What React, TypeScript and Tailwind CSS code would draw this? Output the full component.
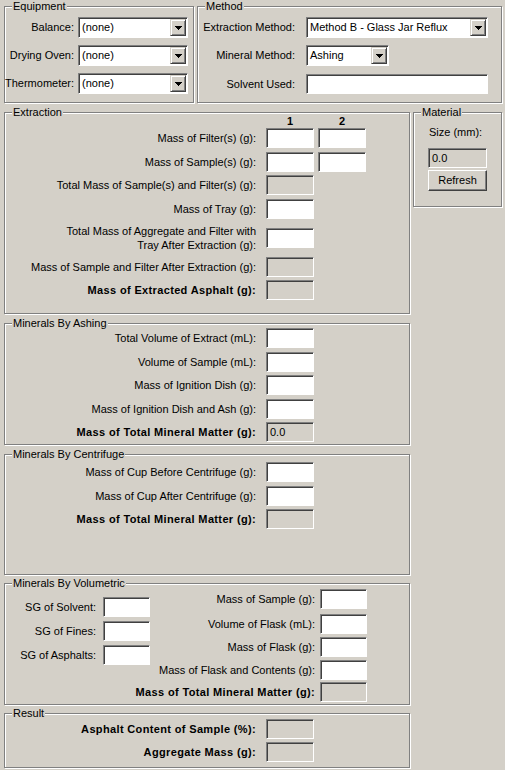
import React from "react";

type Kids = { children?: React.ReactNode };

function Group({ title, className, children }: { title: string; className: string } & Kids) {
  return (
    <div className={"relative shrink-0 border border-[#808080] shadow-[inset_1px_1px_0_#fff,1px_1px_0_#fff] " + className}>
      <span className="absolute left-[7px] top-[-7px] whitespace-nowrap bg-[#d4d0c8] px-[1px] leading-[13px]">{title}</span>
      {children}
    </div>
  );
}

function Field({ w = "w-[48px]", gray, value }: { w?: string; gray?: boolean; value?: string }) {
  return (
    <div
      className={
        "h-[20px] shrink-0 border border-t-[#808080] border-l-[#808080] border-b-white border-r-white shadow-[inset_1px_1px_0_#404040] pl-[3px] leading-[18px] " +
        w +
        (gray ? " bg-[#d4d0c8]" : " bg-white")
      }
    >
      {value}
    </div>
  );
}

function Arrow() {
  return (
    <svg width="7" height="4" viewBox="0 0 7 4" shapeRendering="crispEdges">
      <rect x="0" y="0" width="7" height="1" fill="#000" />
      <rect x="1" y="1" width="5" height="1" fill="#000" />
      <rect x="2" y="2" width="3" height="1" fill="#000" />
      <rect x="3" y="3" width="1" height="1" fill="#000" />
    </svg>
  );
}

function Combo({ w, value }: { w: string; value: string }) {
  return (
    <div
      className={
        "flex h-[21px] shrink-0 border border-t-[#808080] border-l-[#808080] border-b-white border-r-white bg-white p-[1px] shadow-[inset_1px_1px_0_#404040] " +
        w
      }
    >
      <span className="flex-1 truncate pl-[2px] leading-[17px]">{value}</span>
      <div className="flex h-[17px] w-[16px] items-center justify-center border border-t-[#d4d0c8] border-l-[#d4d0c8] border-b-[#404040] border-r-[#404040] bg-[#d4d0c8] shadow-[inset_1px_1px_0_#fff,inset_-1px_-1px_0_#808080]">
        <Arrow />
      </div>
    </div>
  );
}

// label + one or two boxes, label column is 251px wide, boxes start at x=266
function Row({ label, mt, bold, gray, value, second, tall }: {
  label: React.ReactNode; mt: string; bold?: boolean; gray?: boolean; value?: string; second?: boolean; tall?: boolean;
}) {
  return (
    <div className={"flex items-center " + mt + (tall ? " h-[28px]" : " h-[20px]")}>
      <div className={"w-[251px] whitespace-nowrap text-right" + (bold ? " font-bold tracking-[0.35px]" : "") + (tall ? " leading-[14px]" : "")}>{label}</div>
      <div className="ml-[10px]">
        <Field gray={gray} value={value} />
      </div>
      {second && (
        <div className="ml-[4px]">
          <Field />
        </div>
      )}
    </div>
  );
}

function VolRow({ label, mt, bold, gray }: { label: string; mt: string; bold?: boolean; gray?: boolean }) {
  return (
    <div className={"flex h-[20px] items-center justify-end " + mt}>
      <span className={"whitespace-nowrap" + (bold ? " font-bold tracking-[0.35px]" : "")}>{label}</span>
      <div className="ml-[5px]">
        <Field w="w-[47px]" gray={gray} />
      </div>
    </div>
  );
}

export default function App() {
  return (
    <div className="h-[770px] w-[505px] overflow-hidden bg-[#d4d0c8] pl-[4px] pt-[6px] font-['Liberation_Sans',Arial,sans-serif] text-[11px] leading-[13px] text-black">
      <div className="flex gap-[3px]">
        <Group title="Equipment" className="h-[97px] w-[190px]">
          <div className="flex flex-col gap-[7px] pt-[10px]">
            {["Balance:", "Drying Oven:", "Thermometer:"].map((l) => (
              <div key={l} className="flex h-[21px] items-center">
                <div className="w-[69px] whitespace-nowrap text-right">{l}</div>
                <div className="ml-[4px]">
                  <Combo w="w-[110px]" value="(none)" />
                </div>
              </div>
            ))}
          </div>
        </Group>
        <Group title="Method" className="h-[97px] w-[305px]">
          <div className="flex flex-col pt-[10px]">
            <div className="flex h-[21px] items-center">
              <div className="w-[97px] whitespace-nowrap text-right">Extraction Method:</div>
              <div className="ml-[11px]">
                <Combo w="w-[182px]" value="Method B - Glass Jar Reflux" />
              </div>
            </div>
            <div className="mt-[7px] flex h-[21px] items-center">
              <div className="w-[97px] whitespace-nowrap text-right">Mineral Method:</div>
              <div className="ml-[11px]">
                <Combo w="w-[83px]" value="Ashing" />
              </div>
            </div>
            <div className="mt-[8px] flex h-[20px] items-center">
              <div className="w-[97px] whitespace-nowrap text-right">Solvent Used:</div>
              <div className="ml-[11px]">
                <Field w="w-[182px]" />
              </div>
            </div>
          </div>
        </Group>
      </div>

      <div className="mt-[9px] flex items-start gap-[3px]">
        <div className="flex w-[406px] flex-col">
          <Group title="Extraction" className="h-[202px] w-[406px]">
            <div className="flex h-[13px] pt-[2px] font-bold leading-[13px] box-content">
              <div className="w-[261px]" />
              <div className="w-[48px] text-center">1</div>
              <div className="ml-[4px] w-[48px] text-center">2</div>
            </div>
            <Row label="Mass of Filter(s) (g):" mt="mt-0" second />
            <Row label="Mass of Sample(s) (g):" mt="mt-[4px]" second />
            <Row label="Total Mass of Sample(s) and Filter(s) (g):" mt="mt-[3px]" gray />
            <Row label="Mass of Tray (g):" mt="mt-[4px]" />
            <Row
              label={<>Total Mass of Aggregate and Filter with<br />Tray After Extraction (g):</>}
              mt="mt-[5px]"
              tall
            />
            <Row label="Mass of Sample and Filter After Extraction (g):" mt="mt-[5px]" gray />
            <Row label="Mass of Extracted Asphalt (g):" mt="mt-[3px]" bold gray />
          </Group>

          <Group title="Minerals By Ashing" className="mt-[9px] h-[122px] w-[406px]">
            <div className="pt-[4px]">
              <Row label="Total Volume of Extract (mL):" mt="mt-0" />
              <Row label="Volume of Sample (mL):" mt="mt-[4px]" />
              <Row label="Mass of Ignition Dish (g):" mt="mt-[3px]" />
              <Row label="Mass of Ignition Dish and Ash (g):" mt="mt-[4px]" />
              <Row label="Mass of Total Mineral Matter (g):" mt="mt-[3px]" bold gray value="0.0" />
            </div>
          </Group>

          <Group title="Minerals By Centrifuge" className="mt-[9px] h-[121px] w-[406px]">
            <div className="pt-[7px]">
              <Row label="Mass of Cup Before Centrifuge (g):" mt="mt-0" />
              <Row label="Mass of Cup After Centrifuge (g):" mt="mt-[4px]" />
              <Row label="Mass of Total Mineral Matter (g):" mt="mt-[3px]" bold gray />
            </div>
          </Group>

          <Group title="Minerals By Volumetric" className="mt-[8px] h-[122px] w-[406px]">
            <div className="flex">
              <div className="flex w-[145px] flex-col pt-[13px]">
                {[
                  ["SG of Solvent:", "mt-0"],
                  ["SG of Fines:", "mt-[4px]"],
                  ["SG of Asphalts:", "mt-[4px]"],
                ].map(([l, m]) => (
                  <div key={l} className={"flex h-[20px] items-center " + m}>
                    <div className="w-[91px] whitespace-nowrap text-right">{l}</div>
                    <div className="ml-[7px]">
                      <Field w="w-[47px]" />
                    </div>
                  </div>
                ))}
              </div>
              <div className="flex w-[217px] flex-col pt-[5px]">
                <VolRow label="Mass of Sample (g):" mt="mt-0" />
                <VolRow label="Volume of Flask (mL):" mt="mt-[5px]" />
                <VolRow label="Mass of Flask (g):" mt="mt-[3px]" />
                <VolRow label="Mass of Flask and Contents (g):" mt="mt-[3px]" />
                <VolRow label="Mass of Total Mineral Matter (g):" mt="mt-[2px]" bold gray />
              </div>
            </div>
          </Group>

          <Group title="Result" className="mt-[8px] h-[55px] w-[406px]">
            <div className="pt-[5px]">
              <Row label="Asphalt Content of Sample (%):" mt="mt-0" bold gray />
              <Row label="Aggregate Mass (g):" mt="mt-[3px]" bold gray />
            </div>
          </Group>
        </div>

        <Group title="Material" className="h-[95px] w-[89px]">
          <div className="flex flex-col pl-[14px] pt-[13px]">
            <div className="pl-[1px] leading-[13px]">Size (mm):</div>
            <div className="mt-[9px]">
              <Field w="w-[59px]" gray value="0.0" />
            </div>
            <div className="mt-[2px] flex h-[21px] w-[59px] items-center justify-center border border-t-white border-l-white border-b-[#404040] border-r-[#404040] bg-[#d4d0c8] shadow-[inset_-1px_-1px_0_#808080]">
              Refresh
            </div>
          </div>
        </Group>
      </div>
    </div>
  );
}
